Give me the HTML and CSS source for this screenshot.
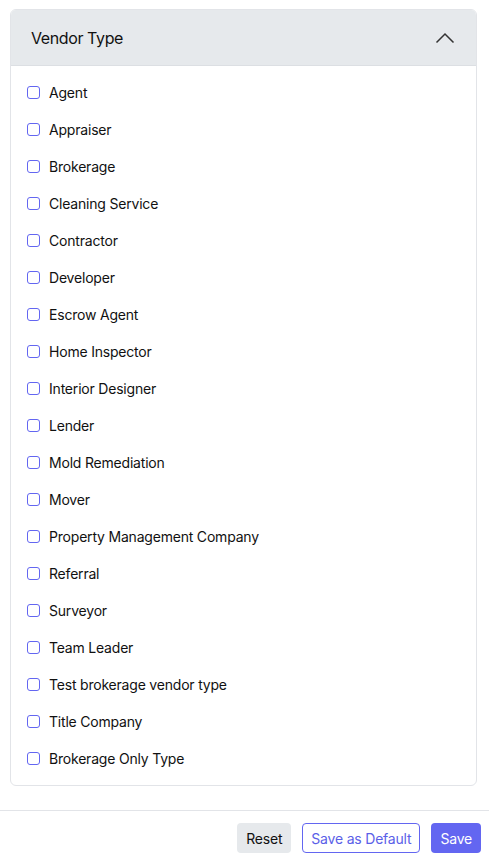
FILE: index.html
```html
<html>
  <head>
    <link rel="stylesheet" href="styles.css">
  </head>
  <body>
    <div class="panel">
      <div class="panel-head">
        <span class="panel-title">Vendor Type</span>
        <svg class="chevron" width="20" height="12" viewBox="0 0 20 12">
          <path d="M1.5 10.5 L10 2 L18.5 10.5" fill="none" stroke="#333" stroke-width="1.5"/>
        </svg>
      </div>
      <div class="panel-body">
        <label class="opt"><input type="checkbox"> Agent</label>
        <label class="opt"><input type="checkbox"> Appraiser</label>
        <label class="opt"><input type="checkbox"> Brokerage</label>
        <label class="opt"><input type="checkbox"> Cleaning Service</label>
        <label class="opt"><input type="checkbox"> Contractor</label>
        <label class="opt"><input type="checkbox"> Developer</label>
        <label class="opt"><input type="checkbox"> Escrow Agent</label>
        <label class="opt"><input type="checkbox"> Home Inspector</label>
        <label class="opt"><input type="checkbox"> Interior Designer</label>
        <label class="opt"><input type="checkbox"> Lender</label>
        <label class="opt"><input type="checkbox"> Mold Remediation</label>
        <label class="opt"><input type="checkbox"> Mover</label>
        <label class="opt"><input type="checkbox"> Property Management Company</label>
        <label class="opt"><input type="checkbox"> Referral</label>
        <label class="opt"><input type="checkbox"> Surveyor</label>
        <label class="opt"><input type="checkbox"> Team Leader</label>
        <label class="opt"><input type="checkbox"> Test brokerage vendor type</label>
        <label class="opt"><input type="checkbox"> Title Company</label>
        <label class="opt"><input type="checkbox"> Brokerage Only Type</label>
      </div>
    </div>
    <div class="footer">
      <button class="btn btn-reset">Reset</button>
      <button class="btn btn-outline">Save as Default</button>
      <button class="btn btn-primary">Save</button>
    </div>
  </body>
</html>
```

FILE: styles.css
```css
body { margin:0; font-family: Inter, "Noto Sans", sans-serif; color:#111; background:#fff; }
.panel { margin:9px 12px 0 10px; border:1px solid #e2e4e8; border-radius:6px; overflow:hidden; }
.panel-head { display:flex; align-items:center; justify-content:space-between; height:55px; padding:0 21px 0 20px; background:#e6e9ec; border-bottom:1px solid #dcdfe3; }
.panel-title { font-size:16px; letter-spacing:-0.4px; color:#111; }
.chevron { display:block; }
.panel-body { display:flex; flex-direction:column; padding:8px 16px 8px; }
.opt { display:flex; align-items:center; height:37px; font-size:14px; letter-spacing:-0.2px; color:#111; }
.opt input { appearance:none; -webkit-appearance:none; margin:0 9px 0 0; width:13px; height:13px; border:1px solid #6366f1; border-radius:3px; background:#fff; }
.footer { display:flex; justify-content:flex-end; gap:11px; margin-top:24px; padding:12px 8px 0; border-top:1px solid #e2e4e8; }
.btn { font-family:inherit; font-size:14px; letter-spacing:-0.2px; height:30px; padding:0 8px; border-radius:4px; border:1px solid transparent; }
.btn-reset { background:#e6e9ec; color:#111; }
.btn-outline { background:#fff; color:#5b5fe8; border-color:#6366f1; }
.btn-primary { background:#6366f1; color:#fff; }
```
